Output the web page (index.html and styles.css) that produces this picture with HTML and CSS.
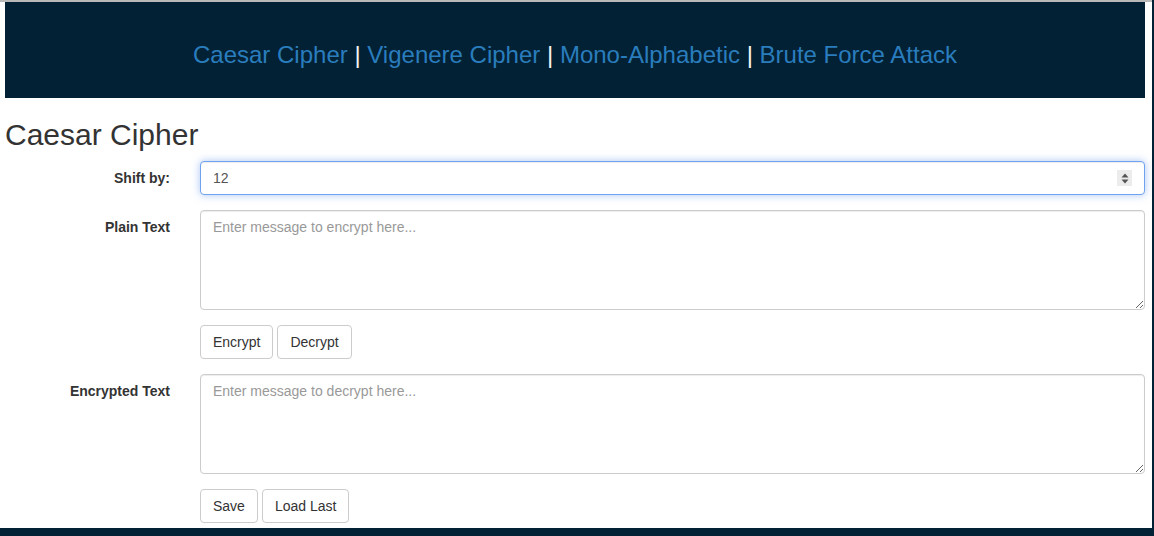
FILE: index.html
```html
<!DOCTYPE html>
<html>
<head>
<meta charset="utf-8">
<title>Caesar Cipher</title>
<link rel="stylesheet" href="styles.css">
</head>
<body>
<div class="page">
  <header class="topbar">
    <nav class="nav">
      <a href="#" class="nav-link">Caesar Cipher</a><span class="sep"> | </span><a href="#" class="nav-link">Vigenere Cipher</a><span class="sep"> | </span><a href="#" class="nav-link">Mono-Alphabetic</a><span class="sep"> | </span><a href="#" class="nav-link">Brute Force Attack</a>
    </nav>
  </header>
  <h2 class="title">Caesar Cipher</h2>
  <form class="form">
    <div class="row">
      <label class="label" for="shift">Shift by:</label>
      <div class="field">
        <div class="number-wrap">
          <input id="shift" class="control control-focus" type="text" value="12">
          <span class="spinner">
            <svg width="10" height="13" viewBox="0 0 10 13"><path d="M5 1.5 L8.5 5.5 L1.5 5.5 Z" fill="#555"/><path d="M1.5 7.5 L8.5 7.5 L5 11.5 Z" fill="#555"/></svg>
          </span>
        </div>
      </div>
    </div>
    <div class="row">
      <label class="label" for="plain">Plain Text</label>
      <div class="field">
        <textarea id="plain" class="control area" placeholder="Enter message to encrypt here..."></textarea>
      </div>
    </div>
    <div class="row">
      <div></div>
      <div class="field buttons">
        <button type="button" class="btn">Encrypt</button>
        <button type="button" class="btn">Decrypt</button>
      </div>
    </div>
    <div class="row">
      <label class="label" for="enc">Encrypted Text</label>
      <div class="field">
        <textarea id="enc" class="control area" placeholder="Enter message to decrypt here..."></textarea>
      </div>
    </div>
    <div class="row last">
      <div></div>
      <div class="field buttons">
        <button type="button" class="btn">Save</button>
        <button type="button" class="btn">Load Last</button>
      </div>
    </div>
  </form>
</div>
</body>
</html>
```
FILE: styles.css
```css
html {
  background: #022135;
}
body {
  margin: 0;
  font-family: "Liberation Sans", Arial, sans-serif;
  font-size: 14px;
  color: #333;
  background: #022135;
}
.page {
  width: 1152px;
  height: 528px;
  box-sizing: border-box;
  background: #fff;
  border-top: 2px solid #b9b9b9;
  padding: 0 7px 0 5px;
}
.topbar {
  background: #022135;
  height: 96px;
  box-sizing: border-box;
  padding-top: 36px;
  text-align: center;
}
.nav {
  font-size: 24px;
  line-height: 34px;
}
.nav-link {
  color: #2a7dbd;
  text-decoration: none;
}
.sep {
  color: #f2f2f2;
  white-space: pre;
}
.title {
  margin: 20px 0 10px;
  font-size: 30px;
  font-weight: 400;
  line-height: 33px;
  color: #333;
}
.form {
  margin: 0;
}
.row {
  display: grid;
  grid-template-columns: 165px 945px;
  column-gap: 30px;
  margin-bottom: 15px;
}
.row.last {
  margin-bottom: 0;
}
.label {
  text-align: right;
  font-weight: 700;
  padding-top: 7px;
  line-height: 20px;
}
.number-wrap {
  position: relative;
}
.control {
  display: block;
  width: 100%;
  height: 34px;
  box-sizing: border-box;
  padding: 6px 12px;
  font-family: "Liberation Sans", Arial, sans-serif;
  font-size: 14px;
  line-height: 20px;
  color: #555;
  background: #fff;
  border: 1px solid #ccc;
  border-radius: 4px;
  box-shadow: inset 0 1px 1px rgba(0,0,0,.075);
  outline: none;
}
.control::placeholder {
  color: #999;
}
.control-focus {
  border-color: #6fa3ef;
  box-shadow: inset 0 1px 1px rgba(0,0,0,.075), 0 0 8px rgba(102,150,233,.55);
}
.spinner {
  position: absolute;
  right: 13px;
  top: 9px;
  width: 15px;
  height: 16px;
  background: #ececec;
  display: flex;
  align-items: center;
  justify-content: center;
}
.area {
  height: 100px;
  resize: vertical;
}
.buttons {
  display: flex;
  gap: 4px;
}
.btn {
  height: 34px;
  box-sizing: border-box;
  padding: 6px 12px;
  font-family: "Liberation Sans", Arial, sans-serif;
  font-size: 14px;
  line-height: 20px;
  color: #333;
  background: #fff;
  border: 1px solid #ccc;
  border-radius: 4px;
  cursor: pointer;
}
```
